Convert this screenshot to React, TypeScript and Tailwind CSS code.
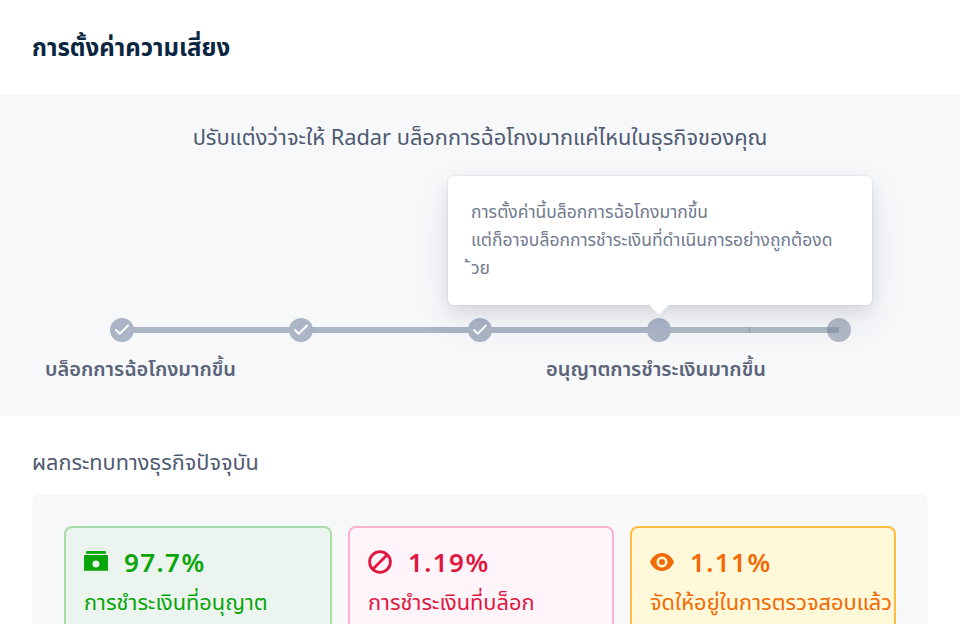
import { Check } from 'lucide-react';

const font = { fontFamily: '"Noto Sans", "Noto Sans Thai", sans-serif' };

function Dot({ done, muted }: { done?: boolean; muted?: boolean }) {
    return (
        <div className={`relative z-10 flex h-6 w-6 items-center justify-center rounded-full ${muted ? 'bg-[#b1bac6]' : 'bg-[#abb5c6]'}`}>
            {done && <Check className="h-[18px] w-[18px] text-white" strokeWidth={2.5} />}
        </div>
    );
}

function Stat({ border, bg, color, value, label, width, icon }: any) {
    return (
        <div className={`h-[120px] rounded-lg border-2 px-[18px] pt-[18px] ${width} ${border} ${bg} ${color}`}>
            <div className="flex items-center gap-4">
                <div className="flex h-6 w-6 items-center justify-center">{icon}</div>
                <span className="text-[26px] font-semibold leading-8 tracking-[1.4px]">{value}</span>
            </div>
            <div className="mt-[10px] whitespace-nowrap text-[21.8px] leading-7">{label}</div>
        </div>
    );
}

export default function App() {
    return (
        <div className="h-[624px] w-[960px] overflow-hidden bg-white" style={font}>
            <div className="flex h-[94px] items-center px-8">
                <h1 className="text-2xl font-bold text-[#0a2540]">การตั้งค่าความเสี่ยง</h1>
            </div>

            {/* Slider band */}
            <div className="relative h-[322px] bg-[#f6f8fa]">
                <p className="pt-[27px] text-center text-[21.8px] leading-8 text-[#4f5a72]">
                    ปรับแต่งว่าจะให้ Radar บล็อกการฉ้อโกงมากแค่ไหนในธุรกิจของคุณ
                </p>

                <div className="absolute left-[448px] top-[82px] z-20 h-[129px] w-[424px] rounded-md bg-white px-[23px] pt-[21px] text-[17.5px] leading-7 text-[#707a8e] shadow-[0_0_0_1px_rgba(136,152,170,0.1),0_15px_35px_0_rgba(49,49,93,0.1),0_5px_15px_0_rgba(0,0,0,0.08)]">
                    การตั้งค่านี้บล็อกการฉ้อโกงมากขึ้น
                    <br />
                    แต่ก็อาจบล็อกการชำระเงินที่ดำเนินการอย่างถูกต้องด
                    <br />
                    ้วย
                    <div className="absolute bottom-[-7px] left-[204px] h-[14px] w-[14px] rotate-45 rounded-[2px] bg-white" />
                </div>

                <div className="relative ml-[109.6px] mt-[165px] flex w-[741px] items-center justify-between">
                    <div className="absolute left-3 right-3 top-[9px] h-[6px] bg-[#abb5c6]" />
                    <div className="absolute left-[549px] right-3 top-[9px] h-[6px] bg-[#b0bac6]" />
                    <Dot done />
                    <Dot done />
                    <Dot done />
                    <Dot />
                    <Dot muted />
                    <div className="absolute left-[639px] top-[9px] z-20 h-[6px] w-px bg-[#8e9bab]" />
                    <div className="absolute right-3 top-[9px] z-20 h-[6px] w-3 bg-[#8e9bab]" />
                </div>

                <div className="relative mt-[13px] h-7 text-[20px] font-semibold leading-7 text-[#5b6479]">
                    <span className="absolute left-[45px]">บล็อกการฉ้อโกงมากขึ้น</span>
                    <span className="absolute left-[546px]">อนุญาตการชำระเงินมากขึ้น</span>
                </div>
            </div>

            {/* Current impact */}
            <div className="px-8">
                <h2 className="pt-[30px] text-[21.7px] leading-8 text-[#4f5a72]">ผลกระทบทางธุรกิจปัจจุบัน</h2>
                <div className="mt-[16px] flex h-[200px] gap-4 rounded-lg bg-[#f6f8fa] p-8">
                    <Stat
                        width="w-[268px]"
                        border="border-[#a8dca8]"
                        bg="bg-[#ebf4ee]"
                        color="text-[#09a509]"
                        value="97.7%"
                        label="การชำระเงินที่อนุญาต"
                        icon={
                            <svg viewBox="0 0 24 24" className="h-6 w-6" fill="currentColor">
                                <rect x="2" y="1" width="20" height="2.7" rx="1" />
                                <path fillRule="evenodd" d="M0 6a1 1 0 0 1 1-1h22a1 1 0 0 1 1 1v14.700H0V6zm12 4.500a3.500 3.500 0 1 0 0 7 3.500 3.500 0 0 0 0-7z" />
                            </svg>
                        }
                    />
                    <Stat
                        width="w-[266px]"
                        border="border-[#ffb3cb]"
                        bg="bg-[#fff4fa]"
                        color="text-[#e0173f]"
                        value="1.19%"
                        label="การชำระเงินที่บล็อก"
                        icon={
                            <svg viewBox="0 0 24 24" className="h-6 w-6" fill="none" stroke="currentColor" strokeWidth="2.8">
                                <circle cx="12" cy="12" r="10.4" />
                                <path d="M5 19 19 5" />
                            </svg>
                        }
                    />
                    <Stat
                        width="w-[266px]"
                        border="border-[#ffbd3f]"
                        bg="bg-[#fff8d9]"
                        color="text-[#f26a05]"
                        value="1.11%"
                        label="จัดให้อยู่ในการตรวจสอบแล้ว"
                        icon={
                            <svg viewBox="0 0 24 24" className="h-6 w-6" fill="currentColor">
                                <path fillRule="evenodd" d="M12 3C6.500 3 2 7 0 12c2 5 6.500 9 12 9s10-4 12-9c-2-5-6.500-9-12-9zm0 3.500a5.500 5.500 0 1 1 0 11 5.500 5.500 0 0 1 0-11zm0 2.500a3 3 0 1 0 0 6 3 3 0 0 0 0-6z" />
                            </svg>
                        }
                    />
                </div>
            </div>
        </div>
    );
}
